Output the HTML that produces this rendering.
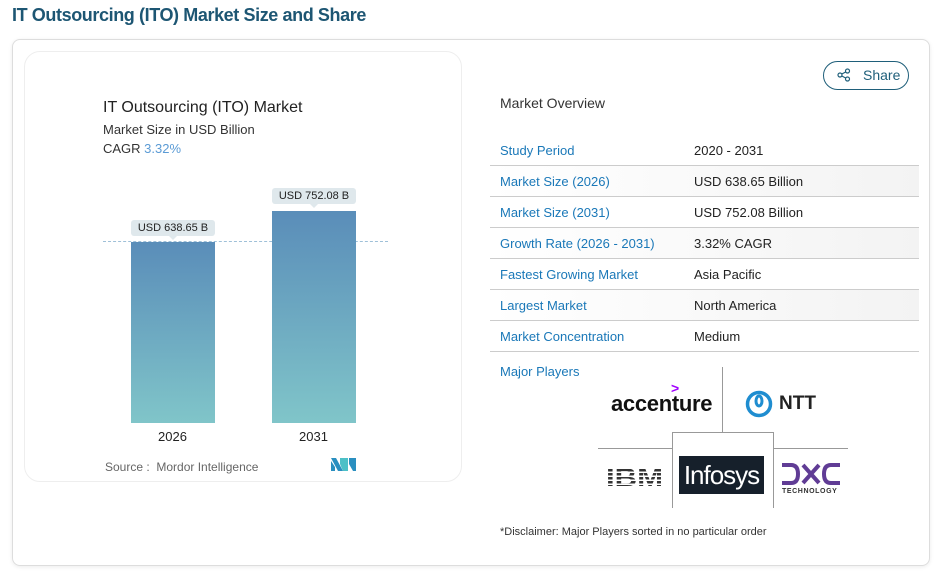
<!DOCTYPE html>
<html><head><style>
*{margin:0;padding:0;box-sizing:border-box}
body{width:940px;height:575px;background:#fff;font-family:"Liberation Sans",sans-serif;position:relative;overflow:hidden;color:#222}
.a{position:absolute;white-space:nowrap}
h1{position:absolute;left:12px;top:5px;font-size:18px;font-weight:bold;color:#1d5673;letter-spacing:-0.4px}
.outer{position:absolute;left:12px;top:39px;width:918px;height:527px;border:1px solid #ddd;border-radius:8px;box-shadow:0 1px 4px rgba(0,0,0,.08)}
.inner{position:absolute;left:24px;top:51px;width:438px;height:431px;border:1px solid #eee;border-radius:16px}
.bar{position:absolute;width:84px;background:linear-gradient(#5a8db9,#80c5c9)}
.tag{position:absolute;background:#dfe8ec;font-size:11px;border-radius:3px;height:16px;line-height:16px;text-align:center}
.tag:after{content:"";position:absolute;left:50%;bottom:-4px;margin-left:-4px;border:4px solid transparent;border-bottom:0;border-top-color:#dfe8ec}
.row{position:absolute;left:490px;width:429px;height:31px;border-bottom:1px solid #ccc;font-size:13px;line-height:32px}
.row span{position:absolute;left:10px;color:#1a78b8}
.row b{position:absolute;left:204px;font-weight:normal;color:#222}
.row.g{background:linear-gradient(90deg,#fff,#f3f3f3)}
</style></head><body>
<h1>IT Outsourcing (ITO) Market Size and Share</h1>
<div class="outer"></div>
<div class="inner"></div>
<div class="a" style="left:103px;top:99px;font-size:16px;color:#222">IT Outsourcing (ITO) Market</div>
<div class="a" style="left:103px;top:122px;font-size:13px;color:#333">Market Size in USD Billion</div>
<div class="a" style="left:103px;top:141px;font-size:13px;color:#333">CAGR <span style="color:#5b9bd5">3.32%</span></div>
<div class="a" style="left:103px;top:241px;width:285px;border-top:1px dashed #9fc0d8"></div>
<div class="bar" style="left:131px;top:242px;height:181px"></div>
<div class="bar" style="left:272px;top:211px;height:212px"></div>
<div class="tag" style="left:131px;top:220px;width:84px">USD 638.65 B</div>
<div class="tag" style="left:272px;top:188px;width:84px">USD 752.08 B</div>
<div class="a" style="left:158px;top:429px;font-size:13px">2026</div>
<div class="a" style="left:299px;top:429px;font-size:13px">2031</div>
<div class="a" style="left:105px;top:460px;font-size:12px;color:#666">Source :&nbsp; Mordor Intelligence</div>
<svg class="a" style="left:331px;top:458px" width="25" height="13"><polygon points="0,0 5,0 12,13 7,13" fill="#2a8fc0"/><polygon points="0,3 4,9 4,13 0,13" fill="#2a8fc0"/><polygon points="9,0 17,0 17,13 12,13 9,6" fill="#4cc0c7"/><polygon points="18,0 25,0 25,13 22,13 18,6" fill="#2a8fc0"/></svg>

<div class="a" style="left:823px;top:61px;width:86px;height:29px;border:1px solid #1f5f7a;border-radius:15px;font-size:14px;color:#1f5f7a;line-height:27px;padding-left:39px">Share</div>
<svg class="a" style="left:837px;top:68px" width="14" height="14" fill="none" stroke="#1f5f7a" stroke-width="1.2"><circle cx="10.5" cy="3" r="2"/><circle cx="3" cy="7" r="2"/><circle cx="10.5" cy="11" r="2"/><path d="M4.8 6 L8.7 4M4.8 8 L8.7 10"/></svg>
<div class="a" style="left:500px;top:95px;font-size:14px;color:#333">Market Overview</div>
<div class="row" style="top:135px"><span>Study Period</span><b>2020 - 2031</b></div>
<div class="row g" style="top:166px"><span>Market Size (2026)</span><b>USD 638.65 Billion</b></div>
<div class="row" style="top:197px"><span>Market Size (2031)</span><b>USD 752.08 Billion</b></div>
<div class="row g" style="top:228px"><span>Growth Rate (2026 - 2031)</span><b>3.32% CAGR</b></div>
<div class="row" style="top:259px"><span>Fastest Growing Market</span><b>Asia Pacific</b></div>
<div class="row g" style="top:290px"><span>Largest Market</span><b>North America</b></div>
<div class="row" style="top:321px"><span>Market Concentration</span><b>Medium</b></div>
<div class="a" style="left:500px;top:364px;font-size:13px;color:#1a78b8">Major Players</div>

<div class="a" style="left:722px;top:367px;height:65px;border-left:1px solid #999"></div>
<div class="a" style="left:598px;top:448px;width:250px;border-top:1px solid #999"></div>
<div class="a" style="left:672px;top:432px;width:102px;height:76px;border:1px solid #999;border-bottom:none;background:#fff"></div>
<div class="a" style="left:611px;top:391px;font-size:22px;font-weight:bold;color:#111;letter-spacing:-0.3px">accenture</div>
<div class="a" style="left:671px;top:380px;font-size:14px;font-weight:bold;color:#a100ff">&gt;</div>
<svg class="a" style="left:745px;top:390px" width="28" height="28"><circle cx="14" cy="14" r="11.5" fill="none" stroke="#1f8dd0" stroke-width="3.5"/><ellipse cx="14" cy="11" rx="3" ry="5" fill="none" stroke="#1f8dd0" stroke-width="3"/></svg>
<div class="a" style="left:779px;top:393px;font-size:19px;font-weight:bold;color:#222">NTT</div>
<svg class="a" style="left:606px;top:465px" width="58" height="24"><text x="0" y="21" font-family="Liberation Sans" font-weight="bold" font-size="25" fill="#333" textLength="57" lengthAdjust="spacingAndGlyphs">IBM</text><g fill="#fff"><rect y="2.5" width="58" height="1.5"/><rect y="6.5" width="58" height="1.5"/><rect y="10.5" width="58" height="1.5"/><rect y="14.5" width="58" height="1.5"/><rect y="18.5" width="58" height="1.5"/></g></svg>
<div class="a" style="left:679px;top:456px;width:85px;height:38px;background:#16202b;color:#fff;font-size:26px;line-height:38px;text-align:center;letter-spacing:-1px">Infosys</div>
<svg class="a" style="left:781px;top:462px" width="60" height="24" fill="none" stroke="#603c95" stroke-width="4"><path d="M1 3 H10 Q17 3 17 12 Q17 21 10 21 H1"/><path d="M22 3 L38 21 M38 3 L22 21"/><path d="M59 3 H50 Q43 3 43 12 Q43 21 50 21 H59"/></svg>
<div class="a" style="left:782px;top:488px;font-size:7px;font-weight:bold;color:#333;letter-spacing:0.6px">TECHNOLOGY</div>
<div class="a" style="left:500px;top:526px;font-size:11px;color:#333">*Disclaimer: Major Players sorted in no particular order</div>
</body></html>
